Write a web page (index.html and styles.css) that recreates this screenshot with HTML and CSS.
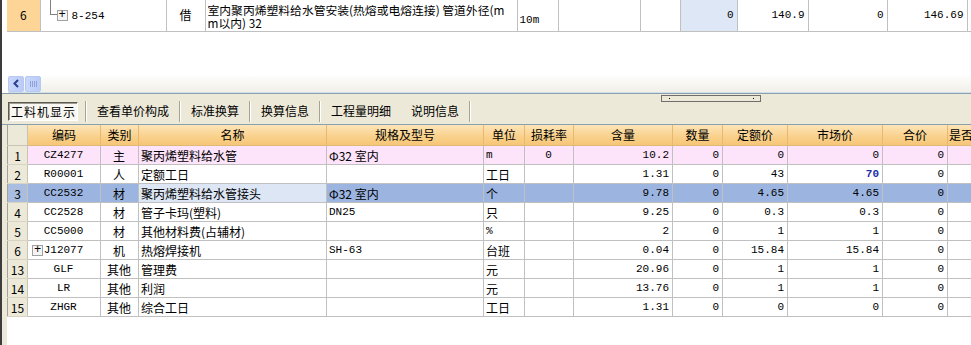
FILE: index.html
```html
<!DOCTYPE html>
<html>
<head>
<meta charset="utf-8">
<link rel="stylesheet" href="styles.css">
</head>
<body>
<div class="page">
  <div class="upper">
    <table class="ugrid">
      <colgroup>
        <col style="width:33px"><col style="width:126px"><col style="width:39px"><col style="width:312px"><col style="width:41px"><col style="width:82px"><col style="width:40px"><col style="width:57px"><col style="width:71px"><col style="width:79px"><col style="width:80px"><col style="width:30px">
      </colgroup>
      <tr class="urow">
        <td class="rh-orange">6</td>
        <td class="tree"><span class="tline"></span><span class="pbox">+</span><span class="mono">8-254</span></td>
        <td class="c">借</td>
        <td class="name2"><div class="nl">室内聚丙烯塑料给水管安装(热熔或电熔连接) 管道外径(m</div><div class="nl">m以内) 32</div></td>
        <td class="mono unit">10m</td>
        <td></td>
        <td></td>
        <td class="r mono lblue">0</td>
        <td class="r mono">140.9</td>
        <td class="r mono">0</td>
        <td class="r mono">146.69</td>
        <td></td>
      </tr>
    </table>
    <div class="ublank"></div>
    <div class="hscroll">
      <div class="sbtn"><svg width="9" height="9" viewBox="0 0 9 9"><path d="M6 1 L2.5 4.5 L6 8" fill="none" stroke="#2a3f8f" stroke-width="2"/></svg></div>
      <div class="sthumb"><span></span><span></span><span></span><span></span></div>
    </div>
  </div>
  <div class="tabbar">
    <div class="tab sel">工料机显示</div>
    <div class="sep"></div>
    <div class="tab">查看单价构成</div>
    <div class="sep"></div>
    <div class="tab">标准换算</div>
    <div class="sep"></div>
    <div class="tab">换算信息</div>
    <div class="sep"></div>
    <div class="tab">工程量明细</div>
    <div class="tab">说明信息</div>
    <div class="sep"></div>
    <div class="grip"><i></i><i></i></div>
  </div>
  <div class="lower">
    <table class="lgrid">
      <colgroup>
        <col style="width:20px"><col style="width:73px"><col style="width:38px"><col style="width:188px"><col style="width:157px"><col style="width:41px"><col style="width:49px"><col style="width:99px"><col style="width:50px"><col style="width:65px"><col style="width:95px"><col style="width:65px"><col style="width:62px">
      </colgroup>
      <tr class="hdr">
        <th class="corner"></th><th>编码</th><th>类别</th><th>名称</th><th>规格及型号</th><th>单位</th><th>损耗率</th><th>含量</th><th>数量</th><th>定额价</th><th>市场价</th><th>合价</th><th class="lft">是否</th>
      </tr>
      <tr class="pink">
        <td class="rh">1</td><td class="c mono">CZ4277</td><td class="c">主</td><td>聚丙烯塑料给水管</td><td>Φ32 室内</td><td class="mono">m</td><td class="c mono">0</td><td class="r mono">10.2</td><td class="r mono">0</td><td class="r mono">0</td><td class="r mono">0</td><td class="r mono">0</td><td></td>
      </tr>
      <tr>
        <td class="rh">2</td><td class="c mono">R00001</td><td class="c">人</td><td>定额工日</td><td></td><td>工日</td><td></td><td class="r mono">1.31</td><td class="r mono">0</td><td class="r mono">43</td><td class="r mono blue">70</td><td class="r mono">0</td><td></td>
      </tr>
      <tr class="selrow">
        <td class="rh rhsel">3</td><td class="c mono">CC2532</td><td class="c">材</td><td class="cur">聚丙烯塑料给水管接头</td><td>Φ32 室内</td><td>个</td><td></td><td class="r mono">9.78</td><td class="r mono">0</td><td class="r mono">4.65</td><td class="r mono">4.65</td><td class="r mono">0</td><td></td>
      </tr>
      <tr>
        <td class="rh">4</td><td class="c mono">CC2528</td><td class="c">材</td><td>管子卡玛(塑料)</td><td class="mono">DN25</td><td>只</td><td></td><td class="r mono">9.25</td><td class="r mono">0</td><td class="r mono">0.3</td><td class="r mono">0.3</td><td class="r mono">0</td><td></td>
      </tr>
      <tr>
        <td class="rh">5</td><td class="c mono">CC5000</td><td class="c">材</td><td>其他材料费(占辅材)</td><td></td><td class="mono">%</td><td></td><td class="r mono">2</td><td class="r mono">0</td><td class="r mono">1</td><td class="r mono">1</td><td class="r mono">0</td><td></td>
      </tr>
      <tr>
        <td class="rh">6</td><td class="c mono exp"><span class="pbox pb2">+</span>J12077</td><td class="c">机</td><td>热熔焊接机</td><td class="mono">SH-63</td><td>台班</td><td></td><td class="r mono">0.04</td><td class="r mono">0</td><td class="r mono">15.84</td><td class="r mono">15.84</td><td class="r mono">0</td><td></td>
      </tr>
      <tr>
        <td class="rh">13</td><td class="c mono">GLF</td><td class="c">其他</td><td>管理费</td><td></td><td>元</td><td></td><td class="r mono">20.96</td><td class="r mono">0</td><td class="r mono">1</td><td class="r mono">1</td><td class="r mono">0</td><td></td>
      </tr>
      <tr>
        <td class="rh">14</td><td class="c mono">LR</td><td class="c">其他</td><td>利润</td><td></td><td>元</td><td></td><td class="r mono">13.76</td><td class="r mono">0</td><td class="r mono">1</td><td class="r mono">1</td><td class="r mono">0</td><td></td>
      </tr>
      <tr>
        <td class="rh">15</td><td class="c mono">ZHGR</td><td class="c">其他</td><td>综合工日</td><td></td><td>工日</td><td></td><td class="r mono">1.31</td><td class="r mono">0</td><td class="r mono">0</td><td class="r mono">0</td><td class="r mono">0</td><td></td>
      </tr>
    </table>
  </div>
</div>
</body>
</html>
```
FILE: styles.css
```css
* { box-sizing: border-box; }
html, body { margin: 0; padding: 0; }
body {
  width: 971px;
  height: 345px;
  overflow: hidden;
  background: #ffffff;
  font-family: "Noto Sans CJK SC", "Noto Sans", sans-serif;
  font-size: 12px;
  color: #000;
}
.page {
  width: 971px;
  height: 345px;
  border-left: 2px solid #3c3c3c;
  display: flex;
  flex-direction: column;
  overflow: hidden;
}
.mono { font-family: "Liberation Mono", "Noto Sans CJK SC", monospace; font-size: 11px; }
.c { text-align: center; }
.r { text-align: right; }

/* upper grid */
.upper {
  padding-left: 5px;
  background: #ffffff;
}
.ugrid {
  border-collapse: collapse;
  table-layout: fixed;
  width: 990px;
}
.ugrid td {
  height: 31px;
  border-right: 1px solid #c0c0c0;
  border-bottom: 1px solid #c0c0c0;
  padding: 0 3px;
  line-height: 12px;
  vertical-align: middle;
  white-space: nowrap;
  overflow: hidden;
}
.ugrid .rh-orange { background: #fcd597; text-align: center; border-right: 1px solid #c0c0c0; }
.ugrid .tree { position: relative; padding-left: 16px; }
.tline {
  position: absolute;
  left: 9px;
  top: 0;
  width: 7px;
  height: 15px;
  border-left: 1px solid #808080;
  border-bottom: 1px solid #808080;
}
.pbox {
  display: inline-block;
  width: 11px;
  height: 11px;
  border: 1px solid #a0a0a0;
  background: #f4f4f4;
  line-height: 8px;
  text-align: center;
  font-family: "Liberation Mono", monospace;
  font-size: 12px;
  margin-right: 4px;
  vertical-align: middle;
}
.ugrid .name2 { padding: 2px 2px 0; }
.nl { height: 12px; line-height: 12px; font-size: 11.8px; }
.nl + .nl { margin-top: 1px; }
.ugrid .unit { vertical-align: bottom; padding-bottom: 5px; padding-left: 2px; }
.ugrid .lblue { background: #dde7f5; }
.ublank { height: 44px; }
.hscroll {
  height: 17px;
  margin-left: 1px;
  display: flex;
  align-items: center;
  gap: 1px;
  background: linear-gradient(#fdfdfc, #f1efe8);
  border-bottom: 1px solid #cfe0ea;
}
.sbtn, .sthumb {
  width: 16px;
  height: 16px;
  border: 1px solid #b7c8f2;
  border-radius: 2px;
  background: linear-gradient(90deg, #c9d7fb, #b9cbf7);
  display: flex;
  align-items: center;
  justify-content: center;
}
.sthumb { gap: 1px; }
.sthumb span { width: 1px; height: 6px; background: #8ea2d8; }

/* tab bar */
.tabbar {
  position: relative;
  height: 31px;
  background: #ece9d8;
  border-top: 1px solid #8aa0ae;
  display: flex;
  align-items: center;
  padding-left: 6px;
  padding-top: 5px;
}
.tab {
  height: 19px;
  line-height: 18px;
  padding: 0 10px;
  font-size: 12px;
  white-space: nowrap;
}
.tab.sel {
  width: 70px;
  margin-right: 7px;
  padding: 0 0 0 2px;
  letter-spacing: 1px;
  background: #f8f7f2;
  border-top: 1px solid #5a5a5a;
  border-left: 1px solid #5a5a5a;
  border-right: 1px solid #ffffff;
  border-bottom: 1px solid #ffffff;
  box-shadow: inset 1px 1px 0 #a09c8c;
}
.sep { height: 21px; background: #a7a394; border-right: 1px solid #fff; width: 2px; }
.grip {
  position: absolute;
  left: 659px;
  top: 1px;
  width: 100px;
  height: 7px;
  border: 1px solid #6f6f6f;
}
.grip i { position: absolute; top: 2px; width: 1px; height: 1px; background: #000; }
.grip i:first-child { left: 7px; }
.grip i:last-child { right: 6px; }

/* lower grid */
.lower {
  flex: 1;
  border-top: 1px solid #8aa0ae;
  padding-left: 5px;
  background: linear-gradient(90deg, #ece9d8 0, #ece9d8 5px, #ffffff 5px);
}
.lgrid {
  border-collapse: collapse;
  table-layout: fixed;
  width: 1002px;
  border-left: 1px solid #a0a0a0;
}
.lgrid th {
  height: 21px;
  font-weight: normal;
  font-size: 12px;
  background: linear-gradient(#fde4b8, #f9d08a 60%, #f6c677);
  border-right: 1px solid #e8b870;
  border-bottom: 1px solid #e0b878;
  padding: 0;
  text-align: center;
  white-space: nowrap;
  overflow: hidden;
}
.lgrid th.lft { text-align: left; padding-left: 1px; }
.lgrid th.corner { background: #ece9d8; border-right: 1px solid #c8c4b4; border-bottom: 1px solid #c8c4b4; }
.lgrid td {
  height: 19px;
  border-right: 1px solid #c0c0c0;
  border-bottom: 1px solid #c0c0c0;
  padding: 0 3px 0 2px;
  line-height: 17px;
  white-space: nowrap;
  overflow: hidden;
}
.lgrid td.rh {
  background: #ece9d8;
  text-align: center;
  padding: 0;
  border-right: 1px solid #c8c4b4;
  border-bottom: 1px solid #d8d4c4;
}
.lgrid tr.pink td { background: #fde4fb; }
.lgrid tr.pink td.rh { background: #ece9d8; }
.lgrid tr.selrow td { background: #9cb5e0; }
.lgrid tr.selrow td.rhsel { background: #a9bde0; }
.lgrid tr.selrow td.cur { background: #dce6f5; }
.lgrid .blue { color: #1b2fa8; font-weight: bold; }
.lgrid td.exp { position: relative; }
.pb2 { position: absolute; left: 4px; top: 4px; }
```
